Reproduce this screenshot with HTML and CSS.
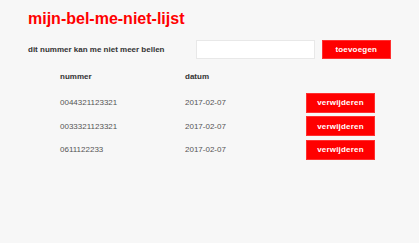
FILE: index.html
```html
<!DOCTYPE html>
<html lang="nl">
<head>
    <meta charset="UTF-8">
    <meta name="viewport" content="width=device-width, initial-scale=1.0">
    <title>mijn-bel-me-niet-lijst</title>
    <link rel="stylesheet" href="styles.css">
</head>
<body>

    <div class="container">
        <h1 class="title">mijn-bel-me-niet-lijst</h1>

        <div class="add-form">
            <label for="nummer">dit nummer kan me niet meer bellen</label>
            <input type="text" id="nummer">
            <button class="btn add-btn">toevoegen</button>
        </div>

        <div class="list">
            <div class="list-head">nummer</div>
            <div class="list-head">datum</div>
            <div></div>

            <div class="cell">0044321123321</div>
            <div class="cell">2017-02-07</div>
            <div><button class="btn remove-btn">verwijderen</button></div>

            <div class="cell">0033321123321</div>
            <div class="cell">2017-02-07</div>
            <div><button class="btn remove-btn">verwijderen</button></div>

            <div class="cell">0611122233</div>
            <div class="cell">2017-02-07</div>
            <div><button class="btn remove-btn">verwijderen</button></div>
        </div>
    </div>

</body>
</html>
```

FILE: styles.css
```css
body {
    margin: 0;
    font-family: "Liberation Sans", Arial, sans-serif;
    background-color: #f7f7f7;
    color: #333;
}
.container {
    padding: 10px 28px;
}
.title {
    margin: 0;
    font-size: 16px;
    line-height: 18px;
    color: #ff0000;
}
.add-form {
    display: flex;
    align-items: center;
    margin-top: 12px;
}
.add-form label {
    width: 168px;
    font-size: 8px;
    font-weight: bold;
    color: #333;
}
.add-form input {
    box-sizing: border-box;
    width: 119px;
    height: 19px;
    margin: 0 0 0 1px;
    border: 1px solid #e8e8e8;
    background: #fff;
}
.btn {
    box-sizing: border-box;
    border: 1px solid #ff3030;
    background: #ff0000;
    color: #fff;
    font-family: "Liberation Sans", Arial, sans-serif;
    font-size: 8px;
    font-weight: bold;
    letter-spacing: 0.2px;
    padding: 0;
    cursor: pointer;
}
.add-btn {
    width: 70px;
    height: 19px;
    margin-left: 7px;
}
.list {
    display: grid;
    grid-template-columns: 125px 121px 69px;
    grid-auto-rows: 20px;
    row-gap: 3.5px;
    align-items: center;
    margin-top: 10px;
    margin-left: 32px;
    font-size: 8px;
}
.list-head {
    font-weight: bold;
    color: #333;
    margin-bottom: 6px;
}
.cell {
    color: #555;
}
.remove-btn {
    width: 69px;
    height: 20px;
    display: block;
}
```
